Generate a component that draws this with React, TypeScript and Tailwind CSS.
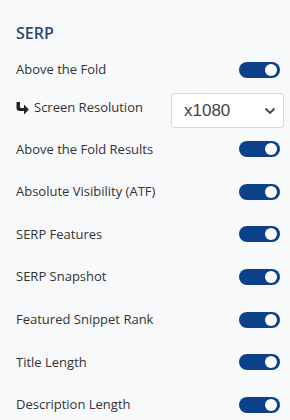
export default function App() {
    const toggles = [
        "Above the Fold Results",
        "Absolute Visibility (ATF)",
        "SERP Features",
        "SERP Snapshot",
        "Featured Snippet Rank",
        "Title Length",
        "Description Length",
    ];

    const Toggle = () => (
        <div className="w-[41px] h-[16px] rounded-full bg-[#0b4189] flex items-center justify-end pr-[3px] mr-[4px]">
            <div className="w-[12px] h-[12px] rounded-full bg-white" />
        </div>
    );

    return (
        <main
            className="w-[290px] h-[420px] bg-[#f8f9fb] pl-4 pr-[6px] pt-[22px] overflow-hidden text-[#333]"
            style={{ fontFamily: '"Open Sans", sans-serif' }}
        >
            {/* section heading */}
            <h2 className="text-[16px] leading-[22px] font-semibold text-[#2b4a6f] mb-[8px]">SERP</h2>

            {/* above the fold */}
            <div className="h-[36px] flex items-center justify-between">
                <span className="text-[13px]">Above the Fold</span>
                <Toggle />
            </div>

            {/* screen resolution */}
            <div className="h-[40px] flex items-end justify-between">
                <span className="self-center flex items-center gap-[5px] text-[13px]">
                    <svg width="13" height="13" viewBox="0 0 13 13">
                        <path d="M0.5 0 H4 V5 Q4 6 5 6 H8 V2.5 L12.8 7.5 L8 12.5 V9 H4 Q0.5 9 0.5 6 Z" fill="#222" />
                    </svg>
                    Screen Resolution
                </span>
                <div
                    className="w-[113px] h-[35px] bg-white border border-[#d9d9d9] rounded-[3px] flex items-center justify-between pl-[12px] pr-[7px] text-[17px] text-[#444]"
                    style={{ fontFamily: '"Liberation Sans", Arial, sans-serif' }}
                >
                    x1080
                    <svg width="12" height="8" viewBox="0 0 12 8">
                        <path d="M1.5 1.5 L6 6 L10.5 1.5" stroke="#444" strokeWidth="1.8" fill="none" />
                    </svg>
                </div>
            </div>

            {/* toggle rows */}
            {toggles.map((label) => (
                <div key={label} className="h-[42.6px] flex items-center justify-between">
                    <span className="text-[13px]">{label}</span>
                    <Toggle />
                </div>
            ))}
        </main>
    );
}
